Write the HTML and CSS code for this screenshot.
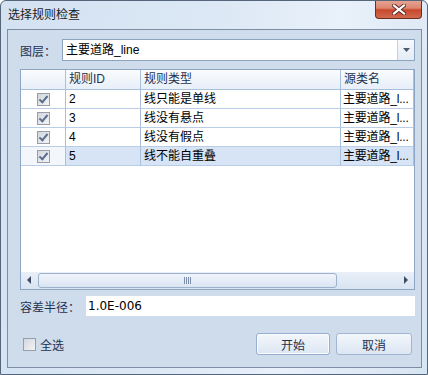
FILE: index.html
```html
<!DOCTYPE html>
<html lang="zh-CN">
<head>
<meta charset="UTF-8">
<title>选择规则检查</title>
<link rel="stylesheet" href="styles.css">
</head>
<body>
  <div class="window">
    <!-- Title bar -->
    <div class="titlebar">
      <span class="title">选择规则检查</span>
      <div class="close">
        <svg width="14" height="11" viewBox="0 0 14 11">
          <path d="M2 1.5 L12 9.5 M12 1.5 L2 9.5" stroke="#5b2a22" stroke-width="4" stroke-linecap="square"/>
          <path d="M2 1.5 L12 9.5 M12 1.5 L2 9.5" stroke="#fff" stroke-width="2.2" stroke-linecap="square"/>
        </svg>
      </div>
    </div>

    <div class="client">
      <!-- Layer picker -->
      <div class="field-row">
        <span class="label">图层：</span>
        <div class="combo">
          <span class="combo-text">主要道路_line</span>
          <span class="combo-btn">
            <svg width="7" height="4" viewBox="0 0 7 4"><path d="M0 0 H7 L3.5 4 Z" fill="#4d5b70"/></svg>
          </span>
        </div>
      </div>

      <!-- Rule grid -->
      <div class="grid">
        <div class="row head">
          <div class="cell"></div>
          <div class="cell">规则ID</div>
          <div class="cell">规则类型</div>
          <div class="cell">源类名</div>
        </div>
        <div class="row">
          <div class="cell chk-cell"><span class="chk on"></span></div>
          <div class="cell">2</div>
          <div class="cell">线只能是单线</div>
          <div class="cell clip">主要道路_l...</div>
        </div>
        <div class="row">
          <div class="cell chk-cell"><span class="chk on"></span></div>
          <div class="cell">3</div>
          <div class="cell">线没有悬点</div>
          <div class="cell clip">主要道路_l...</div>
        </div>
        <div class="row">
          <div class="cell chk-cell"><span class="chk on"></span></div>
          <div class="cell">4</div>
          <div class="cell">线没有假点</div>
          <div class="cell clip">主要道路_l...</div>
        </div>
        <div class="row selected">
          <div class="cell chk-cell"><span class="chk on"></span></div>
          <div class="cell">5</div>
          <div class="cell">线不能自重叠</div>
          <div class="cell clip">主要道路_l...</div>
        </div>
        <div class="grid-fill"></div>
        <div class="hscroll">
          <span class="arrow left"></span>
          <div class="track">
            <div class="thumb"><span class="grip"></span></div>
          </div>
          <span class="arrow right"></span>
        </div>
      </div>

      <!-- Tolerance -->
      <div class="field-row tol">
        <span class="label">容差半径：</span>
        <div class="textbox">1.0E-006</div>
      </div>

      <!-- Footer -->
      <div class="footer">
        <label class="select-all"><span class="chk"></span>全选</label>
        <div class="buttons">
          <button class="btn default">开始</button>
          <button class="btn">取消</button>
        </div>
      </div>
    </div>
  </div>
</body>
</html>
```

FILE: styles.css
```css
body{
  margin:0;
  font-family:'Liberation Sans','Noto Sans CJK SC',sans-serif;
  font-size:12px;
}
.window{
  width:428px;
  height:375px;
  box-sizing:border-box;
  border:1px solid #55657a;
  border-radius:6px 6px 0 0;
  background:linear-gradient(100deg,#d3e1f1 0%,#dce8f5 45%,#e9f1fa 70%,#d7e4f2 100%);
  display:flex;
  flex-direction:column;
  overflow:hidden;
}
.titlebar{
  height:28px;
  flex:none;
  display:flex;
  align-items:flex-start;
  justify-content:space-between;
  padding-left:7px;
}
.title{
  line-height:28px;
  color:#1c1c1c;
  font-size:12px;
}
.close{
  width:47px;
  height:19px;
  margin-top:-1px;
  margin-right:5px;
  box-sizing:border-box;
  border:1px solid #6e2d22;
  border-top:none;
  border-radius:0 0 4px 4px;
  background:linear-gradient(#e6a797 0%,#dc8670 45%,#c8472d 55%,#d06a4e 100%);
  display:flex;
  align-items:center;
  justify-content:center;
}

/* client area */
.client{
  height:339px;
  flex:none;
  margin:0 5px 0 6px;
  box-sizing:border-box;
  border:1px solid #7d8ea4;
  background:#cfdcec;
  padding:9px 6px 12px 12px;
  display:flex;
  flex-direction:column;
}
.field-row{display:flex;align-items:center;}
.label{color:#1e3250;width:42px;flex:none;white-space:nowrap;}
.combo{
  flex:1;
  height:22px;
  box-sizing:border-box;
  border:1px solid #8ea3bf;
  background:#fff;
  display:flex;
  align-items:stretch;
}
.combo-text{flex:1;line-height:20px;padding-left:3px;color:#000;}
.combo-btn{
  width:16px;
  border-left:1px solid #c4d1e2;
  background:linear-gradient(#f6f9fc,#e4ecf6);
  display:flex;align-items:center;justify-content:center;
}

/* grid */
.grid{
  margin-top:8px;
  height:221px;
  box-sizing:border-box;
  border:1px solid #8ea6c4;
  background:#fff;
  display:flex;
  flex-direction:column;
}
.row{
  display:grid;
  grid-template-columns:45px 75px 200px 73px;
  height:19px;
  flex:none;
}
.row.head{height:20px;background:linear-gradient(#fafcfe,#e6eef8);}
.row.head .cell{color:#1e3250;}
.cell{
  border-right:1px solid #a9c0dd;
  border-bottom:1px solid #b9cde6;
  padding-left:3px;
  line-height:18px;
  white-space:nowrap;
  color:#000;
}
.row.head .cell{line-height:19px;border-bottom-color:#a9c0dd;}
.clip{padding-left:2px;letter-spacing:-0.2px;}
.chk-cell{display:flex;align-items:center;justify-content:center;padding:0;}
.row.selected .cell{background:#d6e4f6;}
.row.selected .chk-cell{background:#f3f7fc;}
.grid-fill{flex:1;}

.chk{
  width:11px;height:11px;
  border:1px solid #979ea8;
  background:linear-gradient(135deg,#d2d6dc,#f3f4f6);
  display:inline-block;
  position:relative;
}
.chk.on::after{
  content:'';
  position:absolute;
  left:3px;top:0px;
  width:3px;height:7px;
  border:solid #5a6f8e;
  border-width:0 2px 2px 0;
  transform:rotate(40deg);
}

.hscroll{
  height:17px;
  flex:none;
  display:flex;
  align-items:center;
  background:linear-gradient(#e8eff8,#d9e4f1);
}
.arrow{width:17px;height:17px;flex:none;position:relative;}
.arrow.left::before,.arrow.right::before{
  content:'';position:absolute;top:4px;
  border-top:4px solid transparent;border-bottom:4px solid transparent;
}
.arrow.left::before{left:6px;border-right:4px solid #3f4c63;}
.arrow.right::before{left:7px;border-left:4px solid #3f4c63;}
.track{flex:1;height:17px;display:flex;align-items:center;}
.thumb{
  width:299px;
  height:15px;
  box-sizing:border-box;
  border:1px solid #9cb1cc;
  border-radius:3px;
  background:linear-gradient(#f1f5fb,#dae5f2);
  display:flex;align-items:center;justify-content:center;
}
.grip{
  width:7px;height:7px;
  background:repeating-linear-gradient(90deg,#7d8fa8 0 1px,transparent 1px 2px);
}

.tol{margin-top:6px;}
.tol .label{width:66px;}
.textbox{
  flex:1;
  height:20px;
  line-height:20px;
  background:#fff;
  padding-left:2px;
  color:#000;
  font-family:'DejaVu Sans','Noto Sans CJK SC',sans-serif;
  font-size:12px;
}

.footer{
  margin-top:17px;
  display:flex;
  align-items:center;
  justify-content:space-between;
}
.select-all{
  display:flex;align-items:center;gap:4px;
  color:#1e3250;
  margin-left:3px;
}
.buttons{display:flex;gap:6px;margin-right:3px;}
.btn{
  width:74px;height:22px;
  box-sizing:border-box;
  border:1px solid #a3b6cf;
  border-radius:3px;
  background:linear-gradient(#f3f7fb,#dce6f2);
  color:#1e3250;
  font-family:'Noto Sans CJK SC',sans-serif;
  font-size:12px;
  padding:0;
}
.btn.default{box-shadow:inset 0 0 0 1px #fafcff;border-color:#97aed0;}
.btn + .btn{width:76px;}
```
